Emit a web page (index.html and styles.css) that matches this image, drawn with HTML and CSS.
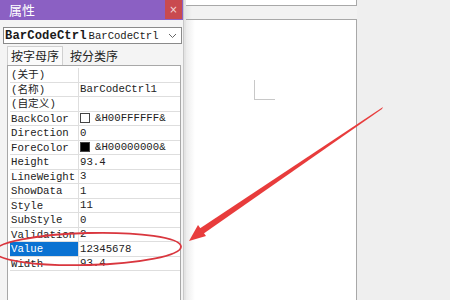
FILE: index.html
```html
<!DOCTYPE html>
<html>
<head>
<meta charset="utf-8">
<link rel="stylesheet" href="styles.css">
</head>
<body>
<div class="screen">
  <div class="panel">
    <div class="titlebar">
      <span class="title">属性</span>
      <span class="close">×</span>
    </div>
    <div class="panel-body">
      <div class="combo">
        <span class="combo-bold">BarCodeCtrl</span>
        <span class="combo-type">BarCodeCtrl</span>
        <svg class="chev" width="9" height="6" viewBox="0 0 9 6"><path d="M1 1 L4.5 4.5 L8 1" fill="none" stroke="#666" stroke-width="1"/></svg>
      </div>
      <div class="tabs">
        <span class="tab active">按字母序</span>
        <span class="tab">按分类序</span>
      </div>
      <div class="grid">
        <div class="row"><span class="k">(关于)</span><span class="v"></span></div>
        <div class="row"><span class="k">(名称)</span><span class="v">BarCodeCtrl1</span></div>
        <div class="row"><span class="k">(自定义)</span><span class="v"></span></div>
        <div class="row"><span class="k">BackColor</span><span class="v"><i class="sw white"></i>&amp;H00FFFFFF&amp;</span></div>
        <div class="row"><span class="k">Direction</span><span class="v">0</span></div>
        <div class="row"><span class="k">ForeColor</span><span class="v"><i class="sw black"></i>&amp;H00000000&amp;</span></div>
        <div class="row"><span class="k">Height</span><span class="v">93.4</span></div>
        <div class="row"><span class="k">LineWeight</span><span class="v">3</span></div>
        <div class="row"><span class="k">ShowData</span><span class="v">1</span></div>
        <div class="row"><span class="k">Style</span><span class="v">11</span></div>
        <div class="row"><span class="k">SubStyle</span><span class="v">0</span></div>
        <div class="row"><span class="k">Validation</span><span class="v">2</span></div>
        <div class="row"><span class="k sel">Value</span><span class="v">12345678</span></div>
        <div class="row"><span class="k">Width</span><span class="v">93.4</span></div>
      </div>
    </div>
  </div>
  <div class="work">
    <div class="top-box"></div>
    <div class="form-box">
      <div class="corner"></div>
    </div>
  </div>
  <div class="side"></div>
  <svg class="annot" width="450" height="300" viewBox="0 0 450 300">
    <ellipse cx="88" cy="249" rx="93" ry="16" fill="none" stroke="#d9363e" stroke-width="1.8" transform="rotate(-1.5 88 249)"/>
    <path d="M383 107 L382 109 L203 234 L199 229 Z" fill="#e83c3c"/>
    <path d="M189 241 L198 225 L206 236 Z" fill="#e83c3c"/>
  </svg>
</div>
</body>
</html>
```

FILE: styles.css
```css
* { box-sizing: border-box; }
html, body { margin: 0; padding: 0; }
body { width: 450px; height: 300px; overflow: hidden; background: #f0f0f0; }
.screen { position: relative; display: flex; width: 450px; height: 300px; }
.panel { width: 184px; display: flex; flex-direction: column; background: #f4f4f4; border-right: 1px solid #c8c8c8; }
.titlebar { height: 20px; background: #8b60c3; display: flex; align-items: center; justify-content: space-between; }
.title { color: #fff; font-family: "Noto Sans CJK SC", sans-serif; font-size: 13px; padding-left: 9px; line-height: 20px; }
.close { width: 17px; height: 19px; margin-right: 1px; align-self: flex-start; background: #c94a4f; color: #f3d6d6; font-family: "DejaVu Sans", sans-serif; font-size: 10px; display: flex; align-items: center; justify-content: center; }
.panel-body { flex: 1; display: flex; flex-direction: column; padding: 7px 1px 0 3px; }
.combo { height: 17px; background: #fff; border: 1px solid #8a8a8a; display: flex; align-items: center; padding-left: 1px; font-family: "Liberation Mono", "Noto Sans CJK SC", monospace; color: #1a1a1a; }
.combo-bold { font-weight: bold; font-size: 12.2px; letter-spacing: 0.1px; }
.combo-type { font-size: 10.6px; margin-left: 2px; }
.chev { margin-left: auto; margin-right: 4px; }
.tabs { display: flex; gap: 3px; padding-left: 4px; margin-top: 2px; height: 19px; }
.tab { font-family: "Noto Sans CJK SC", sans-serif; font-size: 12px; line-height: 18px; padding: 0 3px; color: #222; border: 1px solid transparent; }
.tab.active { background: #fafafa; border: 1px solid #d0d0d0; border-bottom: none; }
.grid { flex: 1; margin: 0 1px 0 4px; background: #fff; border: 1px solid #a8a8a8; border-bottom: none; padding: 2px 0 0 2px; display: flex; flex-direction: column; }
.row { height: 14.5px; flex: none; display: flex; border-bottom: 1px solid #dedede; font-family: "Liberation Mono", "Noto Sans CJK SC", monospace; font-size: 10.7px; color: #222; line-height: 14px; }
.k { width: 69px; padding-left: 1px; border-right: 1px solid #dedede; white-space: nowrap; overflow: hidden; }
.k.sel { background: #0a72d2; color: #fff; }
.v { flex: 1; padding-left: 1px; display: flex; align-items: center; white-space: nowrap; }
.sw { display: inline-block; width: 10px; height: 10px; margin-right: 5px; border: 1px solid #444; }
.sw.white { background: #fff; }
.sw.black { background: #000; }
.work { width: 173px; display: flex; flex-direction: column; gap: 13px; background: linear-gradient(to right, #e2e2e2, #f2f2f2 8px, #f2f2f2); }
.top-box { height: 6px; background: #fff; border-right: 1px solid #a8a8a8; border-bottom: 1px solid #a8a8a8; margin-left: 2px; }
.form-box { flex: 1; border-top: 1px solid #a8a8a8; border-right: 1px solid #a8a8a8; margin-left: 2px; position: relative; background: linear-gradient(to right, #ececec, #fff 9px, #fff); }
.corner { position: absolute; left: 68px; top: 60px; width: 21px; height: 20px; border-left: 1px solid #c8c8c8; border-bottom: 1px solid #c8c8c8; }
.side { flex: 1; background: #efefef; }
.annot { position: absolute; left: 0; top: 0; pointer-events: none; }
```
